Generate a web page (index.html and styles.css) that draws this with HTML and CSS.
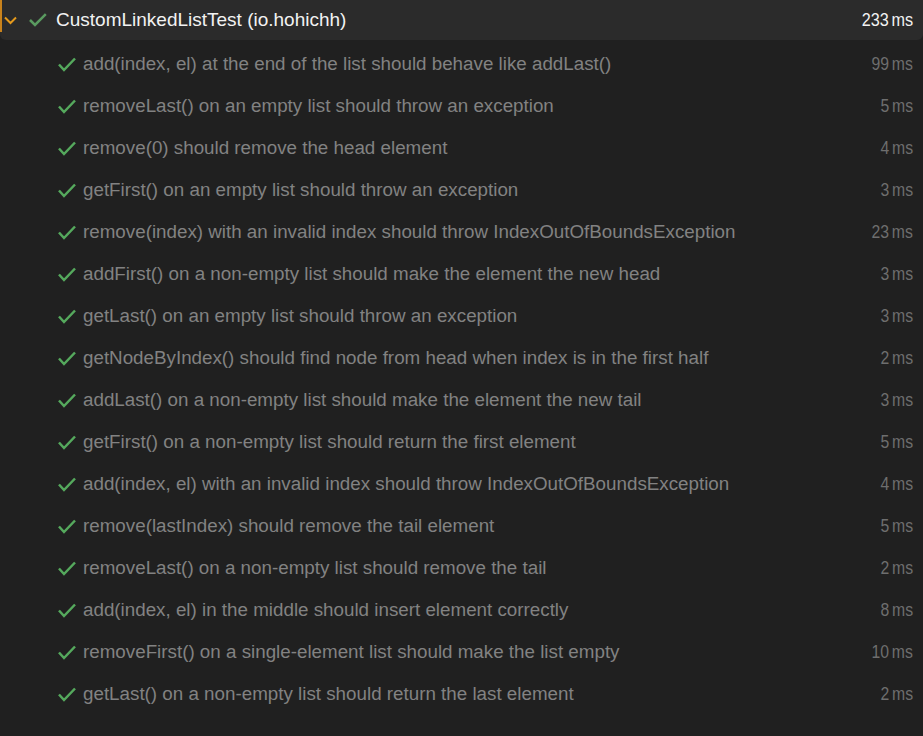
FILE: index.html
```html
<!DOCTYPE html>
<html>
<head>
<meta charset="utf-8">
<link rel="stylesheet" href="styles.css">
</head>
<body>
<div class="tree">
  <div class="header">
    <span class="bar"></span>
    <svg class="chev" width="13" height="9" viewBox="0 0 13 9"><path d="M1 1.5 L6.5 7 L12 1.5" fill="none" stroke="#e59a1c" stroke-width="2"/></svg>
    <svg class="hcheck" width="18" height="14" viewBox="0 0 18 14"><path d="M1 7 L6 12 L16.8 1.2" fill="none" stroke="#5a9b60" stroke-width="2.5"/></svg>
    <span class="name">CustomLinkedListTest (io.hohichh)</span>
    <span class="time">233<span class="unit">ms</span></span>
  </div>
  <div class="rows">
    <div class="row"><svg class="check" width="18" height="15" viewBox="0 0 18 15"><path d="M1 7.5 L6 13 L17 1.5" fill="none" stroke="#55a95d" stroke-width="2.5"/></svg><span class="name">add(index, el) at the end of the list should behave like addLast()</span><span class="time">99<span class="unit">ms</span></span></div>
    <div class="row"><svg class="check" width="18" height="15" viewBox="0 0 18 15"><path d="M1 7.5 L6 13 L17 1.5" fill="none" stroke="#55a95d" stroke-width="2.5"/></svg><span class="name">removeLast() on an empty list should throw an exception</span><span class="time">5<span class="unit">ms</span></span></div>
    <div class="row"><svg class="check" width="18" height="15" viewBox="0 0 18 15"><path d="M1 7.5 L6 13 L17 1.5" fill="none" stroke="#55a95d" stroke-width="2.5"/></svg><span class="name">remove(0) should remove the head element</span><span class="time">4<span class="unit">ms</span></span></div>
    <div class="row"><svg class="check" width="18" height="15" viewBox="0 0 18 15"><path d="M1 7.5 L6 13 L17 1.5" fill="none" stroke="#55a95d" stroke-width="2.5"/></svg><span class="name">getFirst() on an empty list should throw an exception</span><span class="time">3<span class="unit">ms</span></span></div>
    <div class="row"><svg class="check" width="18" height="15" viewBox="0 0 18 15"><path d="M1 7.5 L6 13 L17 1.5" fill="none" stroke="#55a95d" stroke-width="2.5"/></svg><span class="name">remove(index) with an invalid index should throw IndexOutOfBoundsException</span><span class="time">23<span class="unit">ms</span></span></div>
    <div class="row"><svg class="check" width="18" height="15" viewBox="0 0 18 15"><path d="M1 7.5 L6 13 L17 1.5" fill="none" stroke="#55a95d" stroke-width="2.5"/></svg><span class="name">addFirst() on a non-empty list should make the element the new head</span><span class="time">3<span class="unit">ms</span></span></div>
    <div class="row"><svg class="check" width="18" height="15" viewBox="0 0 18 15"><path d="M1 7.5 L6 13 L17 1.5" fill="none" stroke="#55a95d" stroke-width="2.5"/></svg><span class="name">getLast() on an empty list should throw an exception</span><span class="time">3<span class="unit">ms</span></span></div>
    <div class="row"><svg class="check" width="18" height="15" viewBox="0 0 18 15"><path d="M1 7.5 L6 13 L17 1.5" fill="none" stroke="#55a95d" stroke-width="2.5"/></svg><span class="name">getNodeByIndex() should find node from head when index is in the first half</span><span class="time">2<span class="unit">ms</span></span></div>
    <div class="row"><svg class="check" width="18" height="15" viewBox="0 0 18 15"><path d="M1 7.5 L6 13 L17 1.5" fill="none" stroke="#55a95d" stroke-width="2.5"/></svg><span class="name">addLast() on a non-empty list should make the element the new tail</span><span class="time">3<span class="unit">ms</span></span></div>
    <div class="row"><svg class="check" width="18" height="15" viewBox="0 0 18 15"><path d="M1 7.5 L6 13 L17 1.5" fill="none" stroke="#55a95d" stroke-width="2.5"/></svg><span class="name">getFirst() on a non-empty list should return the first element</span><span class="time">5<span class="unit">ms</span></span></div>
    <div class="row"><svg class="check" width="18" height="15" viewBox="0 0 18 15"><path d="M1 7.5 L6 13 L17 1.5" fill="none" stroke="#55a95d" stroke-width="2.5"/></svg><span class="name">add(index, el) with an invalid index should throw IndexOutOfBoundsException</span><span class="time">4<span class="unit">ms</span></span></div>
    <div class="row"><svg class="check" width="18" height="15" viewBox="0 0 18 15"><path d="M1 7.5 L6 13 L17 1.5" fill="none" stroke="#55a95d" stroke-width="2.5"/></svg><span class="name">remove(lastIndex) should remove the tail element</span><span class="time">5<span class="unit">ms</span></span></div>
    <div class="row"><svg class="check" width="18" height="15" viewBox="0 0 18 15"><path d="M1 7.5 L6 13 L17 1.5" fill="none" stroke="#55a95d" stroke-width="2.5"/></svg><span class="name">removeLast() on a non-empty list should remove the tail</span><span class="time">2<span class="unit">ms</span></span></div>
    <div class="row"><svg class="check" width="18" height="15" viewBox="0 0 18 15"><path d="M1 7.5 L6 13 L17 1.5" fill="none" stroke="#55a95d" stroke-width="2.5"/></svg><span class="name">add(index, el) in the middle should insert element correctly</span><span class="time">8<span class="unit">ms</span></span></div>
    <div class="row"><svg class="check" width="18" height="15" viewBox="0 0 18 15"><path d="M1 7.5 L6 13 L17 1.5" fill="none" stroke="#55a95d" stroke-width="2.5"/></svg><span class="name">removeFirst() on a single-element list should make the list empty</span><span class="time">10<span class="unit">ms</span></span></div>
    <div class="row"><svg class="check" width="18" height="15" viewBox="0 0 18 15"><path d="M1 7.5 L6 13 L17 1.5" fill="none" stroke="#55a95d" stroke-width="2.5"/></svg><span class="name">getLast() on a non-empty list should return the last element</span><span class="time">2<span class="unit">ms</span></span></div>
  </div>
</div>
</body>
</html>
```

FILE: styles.css
```css
html, body {
  margin: 0;
  padding: 0;
  background: #202020;
  height: 100%;
  overflow: hidden;
}
.tree {
  font-family: "Liberation Sans", Arial, sans-serif;
  font-size: 18.8px;
}
.header {
  position: relative;
  display: flex;
  align-items: center;
  height: 40px;
  background: #2b2b2b;
  border-radius: 0 0 6px 6px;
  padding-left: 4px;
  padding-right: 10px;
  color: #f2f2f2;
  font-size: 19px;
}
.bar {
  position: absolute;
  left: 0;
  top: 0;
  width: 2px;
  height: 32px;
  background: #c8821c;
}
.chev {
  margin-right: 12px;
}
.hcheck {
  margin-right: 9px;
}
.header .name {
  flex: 1;
}
.rows {
  padding-top: 3px;
}
.row {
  display: flex;
  align-items: center;
  height: 42px;
  padding-left: 58px;
  padding-right: 10px;
  color: #828282;
}
.row .check {
  margin-right: 7px;
}
.name {
  flex: 1;
  white-space: nowrap;
}
.time {
  display: inline-block;
  white-space: nowrap;
  font-size: 18px;
  transform: scaleX(0.9);
  transform-origin: right center;
}
.unit {
  margin-left: 3px;
}
.row .time {
  color: #6e6e6e;
  font-size: 17.5px;
}
```
